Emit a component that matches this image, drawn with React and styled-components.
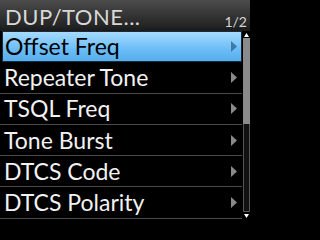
import styled, { createGlobalStyle } from "styled-components";

const GlobalStyle = createGlobalStyle`
  html, body {
    margin: 0;
    padding: 0;
    background: #000;
  }
`;

const items = [
  "Offset Freq",
  "Repeater Tone",
  "TSQL Freq",
  "Tone Burst",
  "DTCS Code",
  "DTCS Polarity",
];

const Arrow = ({ selected }) => (
  <ArrowIcon width="6" height="11" viewBox="0 0 6 11">
    <path d="M0 0 L6 5.5 L0 11 Z" fill={selected ? "#3d7aa6" : "#8a8a8a"} />
  </ArrowIcon>
);

const App = () => {
  return (
    <>
      <GlobalStyle />
      <Screen>
        <Header>
          <Title>DUP/TONE...</Title>
          <Page>1/2</Page>
        </Header>
        <Body>
          <List>
            {items.map((label, i) => (
              <Row key={label} $selected={i === 0}>
                <Label $selected={i === 0}>{label}</Label>
                <Arrow selected={i === 0} />
              </Row>
            ))}
          </List>
          <ScrollBar>
            <ScrollButton>
              <svg width="5" height="4" viewBox="0 0 5 4">
                <path d="M2.5 0 L5 4 L0 4 Z" fill="#fff" />
              </svg>
            </ScrollButton>
            <Track>
              <Thumb />
            </Track>
            <ScrollButton>
              <svg width="5" height="4" viewBox="0 0 5 4">
                <path d="M0 0 L5 0 L2.5 4 Z" fill="#fff" />
              </svg>
            </ScrollButton>
          </ScrollBar>
        </Body>
      </Screen>
    </>
  );
};

const Screen = styled.div`
  width: 250px;
  height: 219px;
  background: #000;
  overflow: hidden;
  font-family: Lato, "Open Sans", sans-serif;
  display: flex;
  flex-direction: column;
`;

const Header = styled.div`
  height: 31px;
  display: flex;
  align-items: flex-end;
  justify-content: space-between;
  padding: 0 3px 0 5px;
  box-sizing: border-box;
  background: linear-gradient(#4c4c4c, #262626 80%, #1a1a1a);
`;

const Title = styled.div`
  color: #d8d8d8;
  font-size: 22px;
  line-height: 28px;
  letter-spacing: 0.5px;
`;

const Page = styled.div`
  color: #d4d4d4;
  font-size: 14px;
  line-height: 15px;
  margin-bottom: 2px;
`;

const Body = styled.div`
  flex: 1;
  display: flex;
`;

const List = styled.div`
  flex: 1;
  display: flex;
  flex-direction: column;
`;

const Row = styled.div`
  height: 31.3px;
  box-sizing: border-box;
  display: flex;
  align-items: center;
  justify-content: space-between;
  padding: 0 5px 0 4px;
  border-bottom: 1px solid #4a4a4a;
  ${(p) =>
    p.$selected &&
    `
    margin-left: 2px;
    padding-left: 2px;
    padding-right: 4px;
    border: 1px solid #1b2a36;
    background: linear-gradient(#a6dbff, #6bbdf6 60%, #55aeee);
  `}
`;

const Label = styled.span`
  color: ${(p) => (p.$selected ? "#000" : "#f2f2f2")};
  font-size: 23px;
  line-height: 28px;
  margin-top: -1px;
`;

const ArrowIcon = styled.svg`
  flex-shrink: 0;
`;

const ScrollBar = styled.div`
  width: 7px;
  margin-left: 1px;
  display: flex;
  flex-direction: column;
`;

const ScrollButton = styled.div`
  height: 7px;
  background: #000;
  display: flex;
  align-items: center;
  justify-content: center;
`;

const Track = styled.div`
  flex: 1;
  border: 1px solid #555;
  background: #111;
  display: flex;
  flex-direction: column;
`;

const Thumb = styled.div`
  height: 86px;
  margin: -1px;
  background: #8a8a8a;
`;

export default App;
